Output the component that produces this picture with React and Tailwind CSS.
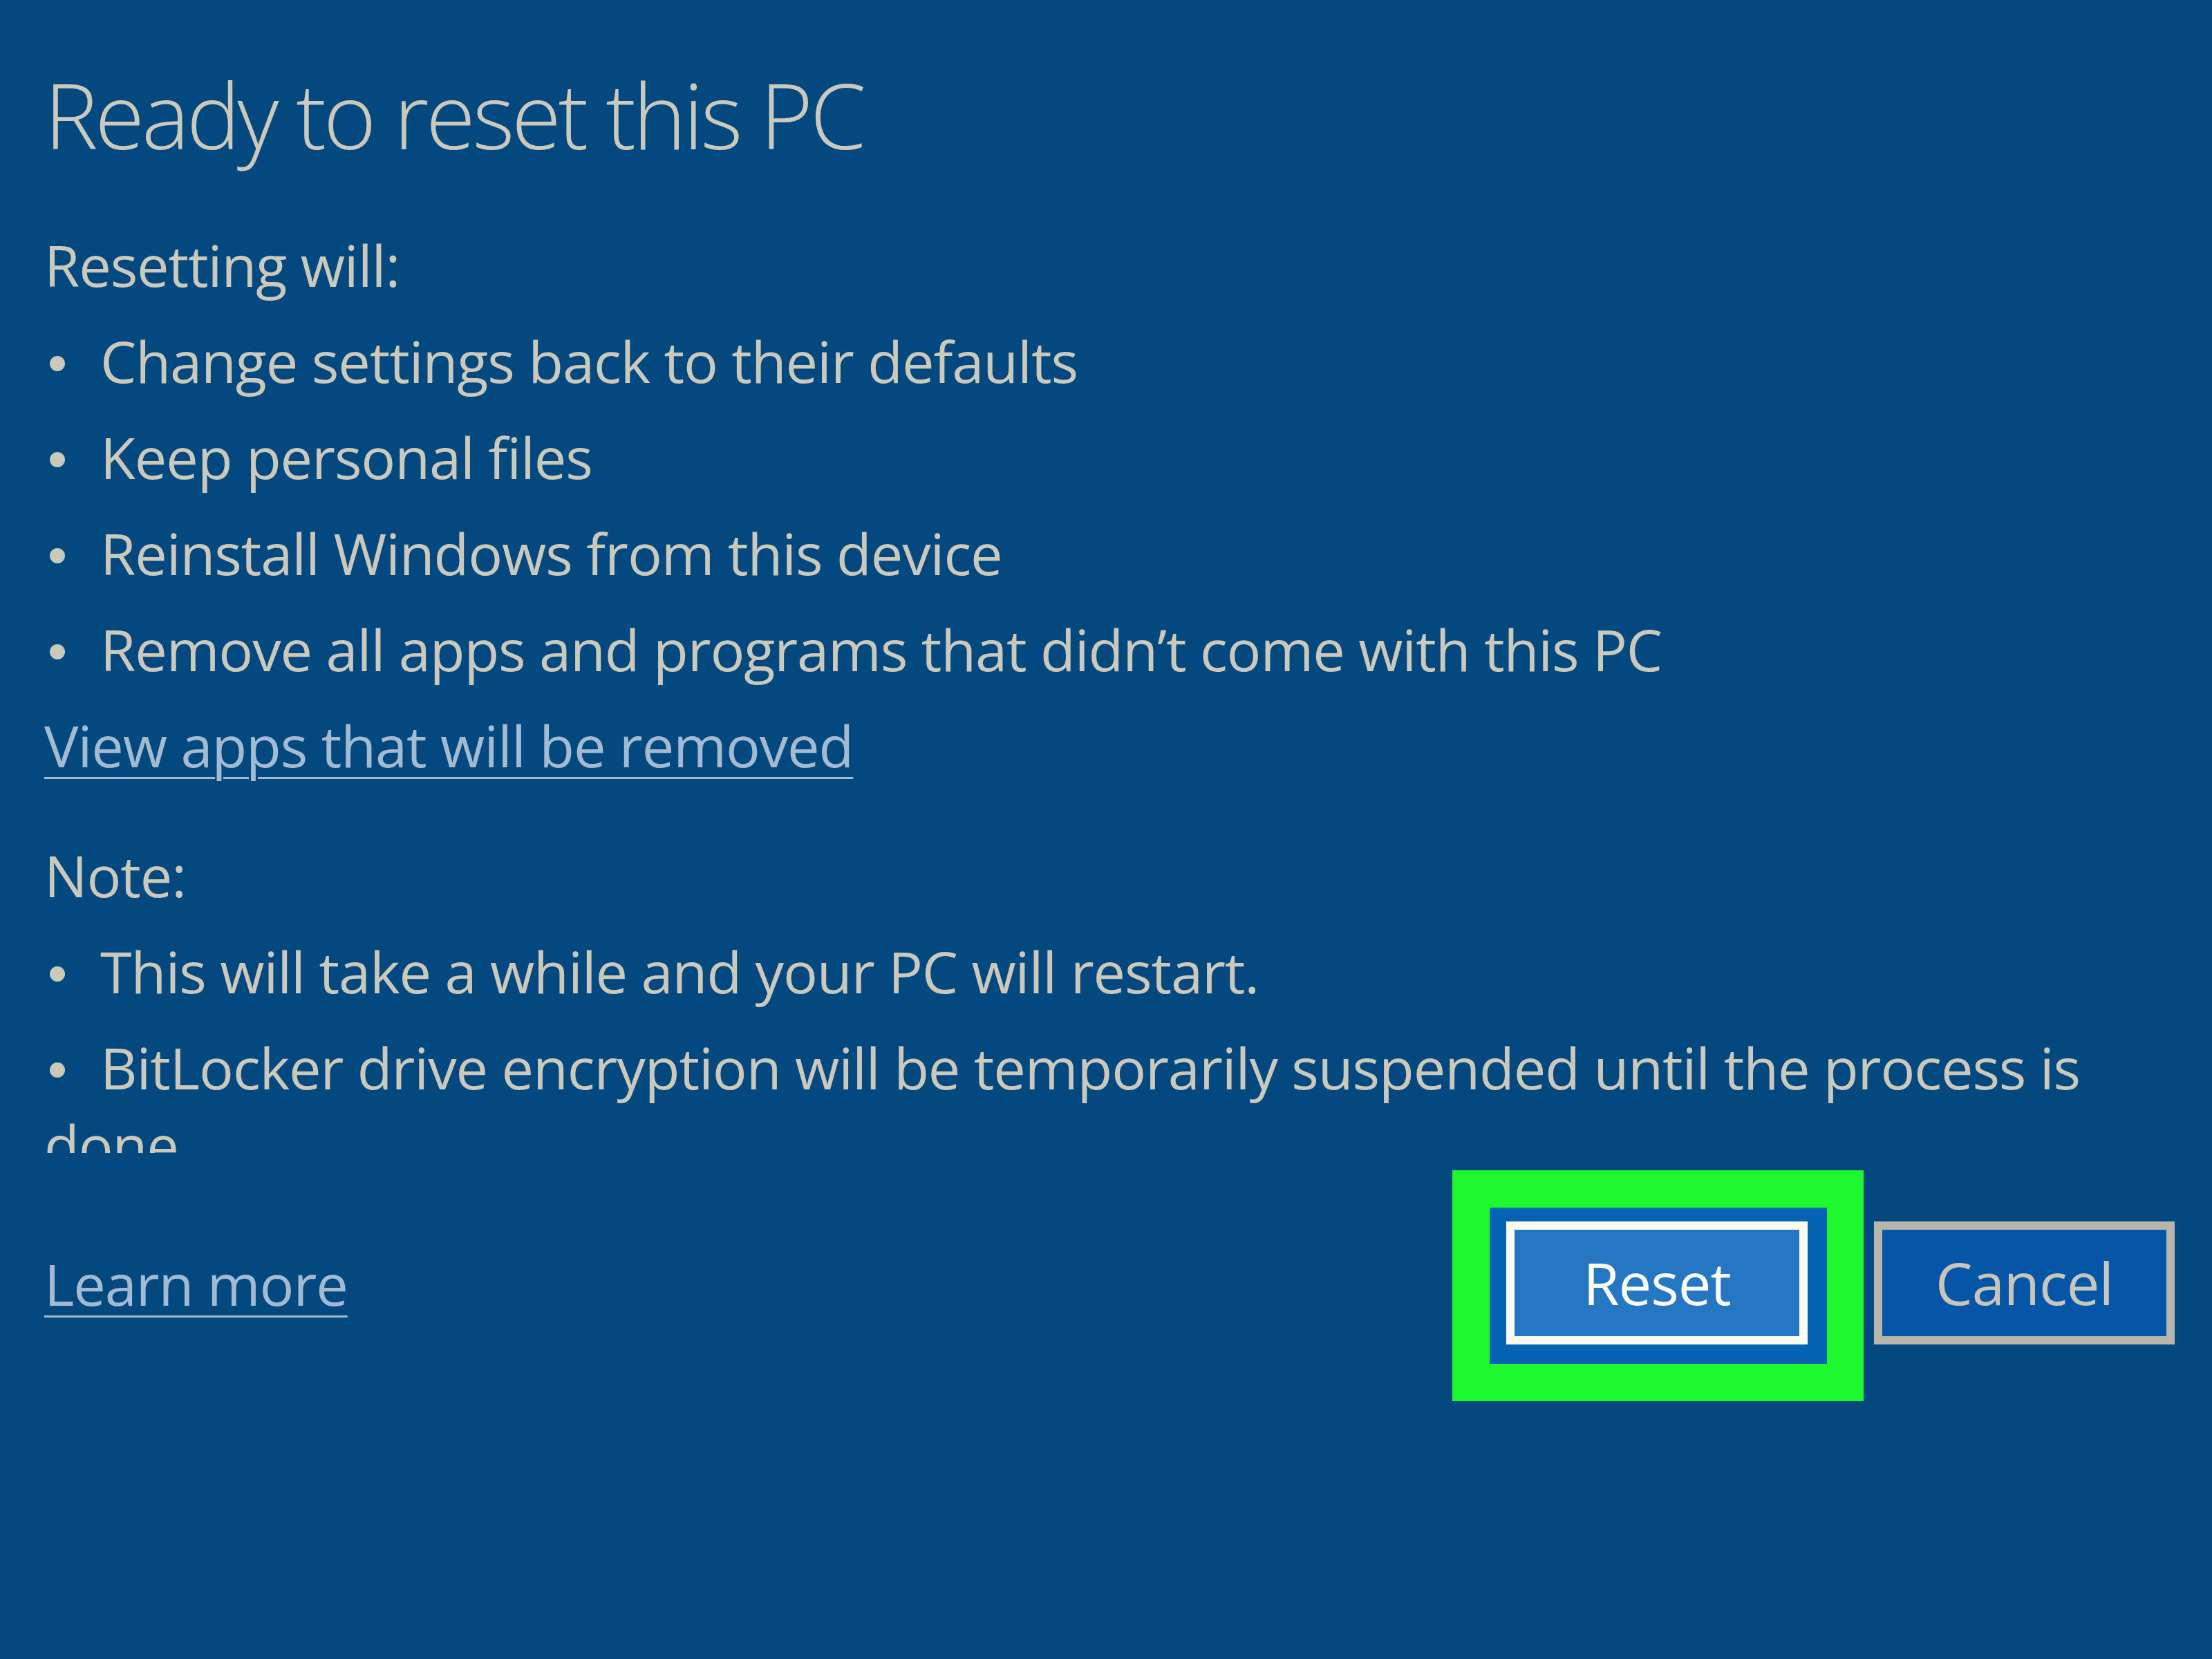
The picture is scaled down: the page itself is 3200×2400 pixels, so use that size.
const resetItems = [
  "Change settings back to their defaults",
  "Keep personal files",
  "Reinstall Windows from this device",
  "Remove all apps and programs that didn\u2019t come with this PC",
];

const noteItems = [
  "This will take a while and your PC will restart.",
  "BitLocker drive encryption will be temporarily suspended until the process is",
];

const Bullet = ({ children }) => (
  <div className="flex items-center h-[139px]">
    <span className="w-[81px] flex">
      <span className="ml-[8px] w-[22px] h-[22px] rounded-full bg-[#cbc8bc] translate-y-[4px]"></span>
    </span>
    <span className="leading-[139px] whitespace-nowrap">{children}</span>
  </div>
);

const App = () => {
  return (
    <div
      className="w-[3200px] h-[2400px] bg-[#03497f] text-[#cbc8bc] overflow-hidden pl-[64px] pr-[54px] pt-[100px]"
      style={{ fontFamily: '"Open Sans", "Noto Sans", sans-serif' }}
    >
      <h1 className="text-[131px] leading-[131px] font-light tracking-[-4.5px]">Ready to reset this PC</h1>

      <div className="mt-[82px] h-[1355px] overflow-hidden text-[83px] tracking-[-1.1px]">
        <div className="leading-[139px]">Resetting will:</div>
        {resetItems.map((item) => (
          <Bullet key={item}>{item}</Bullet>
        ))}
        <div className="leading-[139px]">
          <a href="#" className="text-[#a3bad3] underline decoration-[3px] underline-offset-[14px]">
            View apps that will be removed
          </a>
        </div>

        <div className="mt-[49px] leading-[139px]">Note:</div>
        {noteItems.map((item) => (
          <Bullet key={item}>{item}</Bullet>
        ))}
        <div className="-mt-[27px] leading-[139px]">done</div>
      </div>

      <div className="mt-[99px] flex items-center justify-between">
        <a href="#" className="text-[83px] leading-[139px] tracking-[-1.1px] text-[#a3bad3] underline decoration-[3px] underline-offset-[14px]">
          Learn more
        </a>
        <div className="flex gap-[96px]">
          <div className="relative">
            <div className="absolute -left-[78px] -right-[81px] -top-[74px] -bottom-[82px] bg-[#1ef82e]"></div>
            <div className="absolute -left-[24px] -right-[28px] -top-[20px] -bottom-[28px] bg-[#0563b3]"></div>
            <button className="relative w-[436px] h-[178px] border-[12px] border-[#fbfbf1] bg-[#2576c3] text-[85px] tracking-[-1px] text-[#fdfcf3]">
              Reset
            </button>
          </div>
          <button className="w-[435px] h-[178px] border-[12px] border-[#b7b6ad] bg-[#0556a6] text-[85px] tracking-[-1px] text-[#c8c6bc]">
            Cancel
          </button>
        </div>
      </div>
    </div>
  );
};

export default App;
